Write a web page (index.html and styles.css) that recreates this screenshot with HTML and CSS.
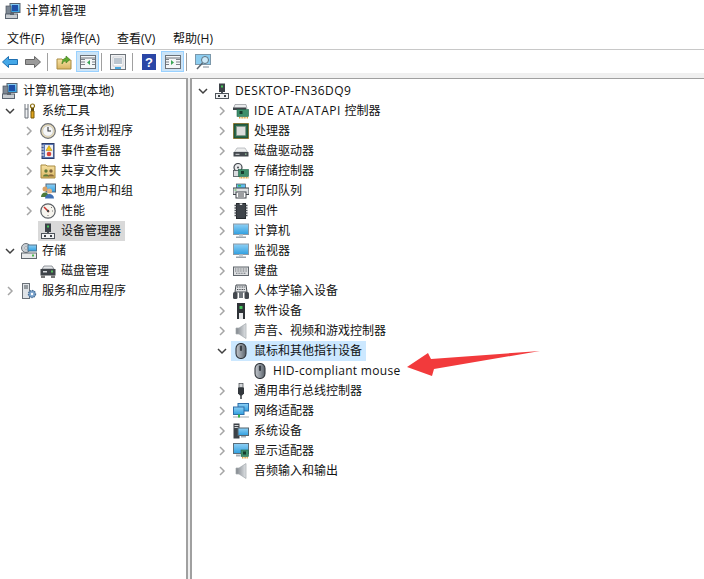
FILE: index.html
```html
<!DOCTYPE html>
<html lang="zh-CN">
<head>
<meta charset="utf-8">
<title>计算机管理</title>
<link rel="stylesheet" href="styles.css">
</head>
<body>
<svg class="defs" width="0" height="0" aria-hidden="true">
<defs>
<linearGradient id="scr" x1="0" y1="0" x2="0" y2="1"><stop offset="0" stop-color="#8fd0f5"/><stop offset="1" stop-color="#2f9fe0"/></linearGradient>
<linearGradient id="mouseg" x1="0" y1="0" x2="1" y2="0"><stop offset="0" stop-color="#c3c7cc"/><stop offset=".55" stop-color="#8c939b"/><stop offset="1" stop-color="#5a6169"/></linearGradient>
<linearGradient id="fold" x1="0" y1="0" x2="0" y2="1"><stop offset="0" stop-color="#f8e3a5"/><stop offset="1" stop-color="#d9b562"/></linearGradient>
<linearGradient id="cone" x1="0" y1="0" x2="1" y2="0"><stop offset="0" stop-color="#7f858b"/><stop offset="1" stop-color="#dfe2e5"/></linearGradient>
<symbol id="i-mgmt" viewBox="0 0 16 16"><rect x="5" y="0.500" width="10" height="9" fill="url(#scr)" stroke="#5a6470"/><rect x="7" y="2" width="6" height="6" fill="#1d4fa8"/><rect x="1" y="3" width="5" height="8" fill="#7d8894" stroke="#4a525c" stroke-width=".7"/><rect x="0.500" y="11" width="12" height="4.500" fill="#c7ccd1" stroke="#5a6470"/><rect x="5" y="10" width="4" height="2" fill="#5a6470"/></symbol>
<symbol id="i-tools" viewBox="0 0 16 16"><path d="M4 1v5M7 1v5M4 6h3v9H4z" fill="#eef0f2" stroke="#6a7078"/><path d="M11.500 5v3" stroke="#5c4a10" stroke-width="3"/><path d="M10 8h3v7h-3z" fill="#e0a51c" stroke="#7a5a08"/><circle cx="11.500" cy="3" r="2" fill="none" stroke="#8a6d10" stroke-width="1.200"/></symbol>
<symbol id="i-clock" viewBox="0 0 16 16"><circle cx="8" cy="8" r="7.300" fill="#e9dcb8" stroke="#6d7075" stroke-width="1.200"/><circle cx="8" cy="8" r="5.200" fill="#f6f7f8" stroke="#b4b8bd" stroke-width=".5"/><path d="M8 4v4h3" fill="none" stroke="#33373c" stroke-width="1.100"/></symbol>
<symbol id="i-event" viewBox="0 0 16 16"><rect x="2" y="0.500" width="12" height="15" fill="#5b78b5" stroke="#2c3d6b"/><rect x="5" y="2" width="8" height="12" fill="#f0f1f3"/><path d="M1 3h3M1 6h3M1 9h3M1 12h3" stroke="#e8eaf0"/><path d="M9 2.500l3 5H6z" fill="#f4c71a" stroke="#a07e10" stroke-width=".5"/><circle cx="9" cy="11" r="2.300" fill="#d8433a"/></symbol>
<symbol id="i-share" viewBox="0 0 16 16"><path d="M1 2h5l1 1h8v12H1z" fill="url(#fold)" stroke="#a88a40"/><circle cx="6" cy="8" r="1.700" fill="#5f7a3a"/><path d="M3 13.500c0-3 6-3 6 0z" fill="#5f7a3a"/><circle cx="11" cy="8" r="1.700" fill="#7a5f3a"/><path d="M8 13.500c0-3 6-3 6 0z" fill="#8b6a3c"/></symbol>
<symbol id="i-users" viewBox="0 0 16 16"><rect x="6" y="1" width="9.500" height="8" fill="url(#scr)" stroke="#55667a"/><circle cx="5" cy="6" r="2.500" fill="#d9a066"/><path d="M1 14c0-6 8-6 8 0z" fill="#4e7a3a"/><circle cx="9.500" cy="8" r="2.500" fill="#e2b280"/><path d="M5 15.500c0-6 9-6 9 0z" fill="#3f6fb5"/></symbol>
<symbol id="i-perf" viewBox="0 0 16 16"><circle cx="8" cy="8" r="7.200" fill="#f6f4ee" stroke="#5b5f64" stroke-width="1.200"/><path d="M4 4l5 5" stroke="#c9302c" stroke-width="1.500"/><circle cx="8" cy="8" r="1.200" fill="#444"/><path d="M11 4l1 1M13 8h-1M8 13v-1" stroke="#777"/></symbol>
<symbol id="i-dev" viewBox="0 0 16 16"><rect x="5" y="0.500" width="6" height="8.500" fill="#3d4248"/><rect x="7" y="2.500" width="2" height="2" fill="#46c85a"/><path d="M7 9h2v2H7z" fill="#50565d"/><rect x="1.500" y="10.500" width="13" height="5" fill="#f2f3f4" stroke="#4e545b"/><rect x="4" y="12" width="2" height="2" fill="#3d4248"/><rect x="10" y="12" width="2" height="2" fill="#3d4248"/></symbol>
<symbol id="i-storage" viewBox="0 0 16 16"><circle cx="5" cy="5" r="4.500" fill="#c9ced3" stroke="#6a7179"/><circle cx="5" cy="5" r="1.300" fill="#fff" stroke="#6a7179" stroke-width=".5"/><rect x="7" y="2" width="8.500" height="6" fill="url(#scr)" stroke="#4f7590"/><rect x="0.500" y="10" width="15" height="5.500" fill="#e6e8ea" stroke="#5f666d"/><rect x="11" y="11.500" width="2" height="2" fill="#4fb94f"/></symbol>
<symbol id="i-disk" viewBox="0 0 16 16"><path d="M2 6l2-3h8l2 3z" fill="#e4e6e8" stroke="#6b7178" stroke-width=".7"/><rect x="0.500" y="6" width="15" height="6.500" fill="#3f4449"/><rect x="3" y="8" width="4" height="1.500" fill="#d8dadd"/><rect x="11" y="7.500" width="2" height="2" fill="#56c25d"/><rect x="1" y="12.500" width="4" height="2.500" fill="#777"/><rect x="11" y="12.500" width="4" height="2.500" fill="#777"/></symbol>
<symbol id="i-svc" viewBox="0 0 16 16"><rect x="1.500" y="0.500" width="7" height="15" fill="#dfe3e7" stroke="#6b7178"/><path d="M3 3h4M3 5h4" stroke="#4b5259"/><circle cx="11" cy="11" r="3.500" fill="#7ea6cf" stroke="#4a6f96" stroke-width="1.400" stroke-dasharray="1.500 .8"/><circle cx="11" cy="11" r="1.200" fill="#fff"/></symbol>
<symbol id="i-ide" viewBox="0 0 16 16"><path d="M0.500 5.500L2 1.500h11l1 4z" fill="#e9eaec" stroke="#8c9197" stroke-width=".7"/><rect x="0" y="4.500" width="13" height="2.500" fill="#3f4449"/><rect x="4" y="6.500" width="11.500" height="7" fill="#3f8f6b" stroke="#23634a" stroke-width=".6"/><rect x="6.500" y="8" width="3" height="3" fill="#173d2e"/><path d="M6 14.800h9" stroke="#d8a13a" stroke-width="1.600" stroke-dasharray="1 .6"/></symbol>
<symbol id="i-cpu" viewBox="0 0 16 16"><rect x="0" y="0" width="16" height="16" fill="#c9a44a"/><rect x="1" y="1" width="14" height="14" fill="#27694a" stroke="#1e3a2c" stroke-width=".8"/><rect x="3.500" y="3.500" width="9" height="9" fill="#dcdedc" stroke="#8a908a" stroke-width=".5"/></symbol>
<symbol id="i-hdd" viewBox="0 0 16 16"><path d="M1.500 9l2.500-4h8l2.500 4z" fill="#eceded" stroke="#9a9fa4" stroke-width=".6"/><rect x="0.500" y="9" width="15" height="4.500" fill="#43484d"/><rect x="2.500" y="10.800" width="4" height="1" fill="#d0d2d5"/><rect x="12" y="10.500" width="1.500" height="1.200" fill="#9fd6a4"/></symbol>
<symbol id="i-stctl" viewBox="0 0 16 16"><circle cx="5" cy="4.500" r="4" fill="#e8e9eb" stroke="#454a50" stroke-width="1.200"/><circle cx="5" cy="4.500" r="1" fill="#454a50"/><rect x="0.500" y="7.500" width="6" height="6" fill="#dadcdf" stroke="#4b5157" stroke-width=".8"/><rect x="5.500" y="6.500" width="10" height="7" fill="#3f8f6b" stroke="#23634a" stroke-width=".6"/><rect x="8" y="8" width="3" height="3" fill="#173d2e"/><path d="M6.500 14.800h9" stroke="#d8a13a" stroke-width="1.600" stroke-dasharray="1 .6"/></symbol>
<symbol id="i-print" viewBox="0 0 16 16"><rect x="3.500" y="1" width="9" height="5" fill="#5fbdec" stroke="#4a5057" stroke-width=".7"/><rect x="5" y="2" width="3" height="1.500" fill="#3fb65a"/><rect x="0" y="5" width="16" height="6.500" fill="#dfe1e3" stroke="#3f454b"/><rect x="1.500" y="6.500" width="2" height="1" fill="#4fb94f"/><rect x="3" y="9" width="10" height="6" fill="#fff" stroke="#3f454b"/><path d="M5 11h6M5 13h6" stroke="#3a3f44"/></symbol>
<symbol id="i-fw" viewBox="0 0 16 16"><rect x="3.500" y="0.500" width="9" height="15" fill="#3f444a" stroke="#24282c"/><path d="M1.500 2.500h2M1.500 5h2M1.500 7.500h2M1.500 10h2M1.500 12.500h2M12.500 2.500h2M12.500 5h2M12.500 7.500h2M12.500 10h2M12.500 12.500h2" stroke="#4a4f55" stroke-width="1.300"/><path d="M6.500 0.500a1.500 1.500 0 0 0 3 0z" fill="#fff"/></symbol>
<symbol id="i-pc" viewBox="0 0 16 16"><rect x="0.500" y="1" width="15" height="10.500" fill="url(#scr)" stroke="#8b9aa6"/><path d="M6 11.500h4v2H6z" fill="#c6cdd3"/><rect x="3" y="13.500" width="10" height="1.500" fill="#9aa3ab"/></symbol>
<symbol id="i-kbd" viewBox="0 0 16 16"><rect x="0.500" y="4" width="15" height="8.500" fill="#dcdee0" stroke="#5f656b"/><path d="M2 6h12M2 8h12M3 10.300h10" stroke="#6e7379" stroke-width="1.100" stroke-dasharray="1 .6"/></symbol>
<symbol id="i-hid" viewBox="0 0 16 16"><path d="M2 9l1-7h10l1 7z" fill="#dfe1e3" stroke="#484e54"/><path d="M4 4h8M4 6.500h8" stroke="#44494f" stroke-width="1.100" stroke-dasharray="1 .7"/><rect x="0" y="9" width="4.500" height="7" rx="1.500" fill="#43484e"/><rect x="11.500" y="9" width="4.500" height="7" rx="1.500" fill="#43484e"/><rect x="6" y="9" width="4" height="6" fill="#6f757b"/></symbol>
<symbol id="i-sw" viewBox="0 0 16 16"><rect x="4" y="0" width="8" height="16" fill="#2e3237"/><rect x="6.500" y="3" width="3" height="3" fill="#43c25b"/><rect x="6" y="10" width="4" height="6" fill="#e7e8ea"/></symbol>
<symbol id="i-snd" viewBox="0 0 16 16"><path d="M3 5h3L13 0.500v15L6 11H3z" fill="url(#cone)" stroke="#a4a9ae" stroke-width=".7"/></symbol>
<symbol id="i-mouse" viewBox="0 0 16 16"><rect x="3" y="0.500" width="10" height="15" rx="5" fill="url(#mouseg)" stroke="#31363c" stroke-width="1.100"/><rect x="6.900" y="2.500" width="2.200" height="5.500" rx="1.100" fill="#3a4047"/></symbol>
<symbol id="i-usb" viewBox="0 0 16 16"><rect x="6" y="0.500" width="4" height="4" fill="#d2d5d8" stroke="#43484d" stroke-width=".7"/><path d="M5 4.500h6v6l-2 2H7l-2-2z" fill="#33383d"/><path d="M8 12v4" stroke="#33383d" stroke-width="1.500"/></symbol>
<symbol id="i-net" viewBox="0 0 16 16"><rect x="5" y="0.500" width="10.500" height="7.500" fill="url(#scr)" stroke="#2f6ea8"/><rect x="0.500" y="4" width="10.500" height="7.500" fill="url(#scr)" stroke="#2f6ea8"/><rect x="0" y="13" width="16" height="2" fill="#cfd3d6"/><path d="M5 11.500h2v3H5z" fill="#39b54a"/></symbol>
<symbol id="i-sys" viewBox="0 0 16 16"><rect x="0.500" y="0.500" width="6" height="15" fill="#3c4147"/><rect x="1.500" y="2" width="4" height="1" fill="#d5d7da"/><rect x="1.500" y="4" width="4" height="1" fill="#d5d7da"/><rect x="5" y="5" width="10.500" height="7.500" fill="url(#scr)" stroke="#54646f"/><rect x="8" y="13" width="5" height="1.500" fill="#a6adb3"/></symbol>
<symbol id="i-disp" viewBox="0 0 16 16"><rect x="0.500" y="0.500" width="15" height="10" fill="url(#scr)" stroke="#5a6d7a"/><rect x="8" y="7" width="7.500" height="6.500" fill="#3f8f6b" stroke="#23634a" stroke-width=".6"/><rect x="10" y="8.500" width="3" height="3" fill="#173d2e"/><path d="M9 14.800h6" stroke="#d8a13a" stroke-width="1.500" stroke-dasharray="1 .6"/><rect x="3" y="11.500" width="4" height="2" fill="#a6adb3"/></symbol>
<symbol id="chev-r" viewBox="0 0 16 16"><path d="M6 4l4 4-4 4" fill="none" stroke="#a6a6a6" stroke-width="1.500"/></symbol>
<symbol id="chev-d" viewBox="0 0 16 16"><path d="M4 6l4 4 4-4" fill="none" stroke="#404040" stroke-width="1.500"/></symbol>
</defs>
</svg>

<header class="titlebar">
  <svg class="ic"><use href="#i-mgmt"/></svg>
  <span>计算机管理</span>
</header>

<nav class="menubar">
  <span class="menu">文件(F)</span>
  <span class="menu">操作(A)</span>
  <span class="menu">查看(V)</span>
  <span class="menu">帮助(H)</span>
</nav>

<div class="toolbar">
  <span class="tool tool-arrow"><svg viewBox="0 0 16 12" class="ic-arrow"><path d="M0.500 6L6.500 0.500V3.500H15.500V8.500H6.500V11.500z" fill="#45a8e8" stroke="#1f6fb0"/></svg></span>
  <span class="tool tool-arrow"><svg viewBox="0 0 16 12" class="ic-arrow"><path d="M15.500 6L9.500 0.500V3.500H0.500V8.500H9.500V11.500z" fill="#9a9a9a" stroke="#666"/></svg></span>
  <span class="sep"></span>
  <span class="tool tool-up"><svg viewBox="0 0 16 16" class="ic"><path d="M1 5h5l1 1h8v9H1z" fill="url(#fold)" stroke="#a88a40"/><path d="M6 10c0-4 2-6 4-6V2l4 3.500L10 9V7c-2 0-3 1-4 3z" fill="#5fa82f" stroke="#3f7a1c" stroke-width=".6"/></svg></span>
  <span class="tool tool-on"><svg viewBox="0 0 16 14" class="ic-pane"><rect x="0.500" y="0.500" width="15" height="13" fill="#f4f6f8" stroke="#6b7178"/><path d="M0.500 3h15" stroke="#6b7178"/><path d="M1 4.500h4M1 7h4M1 9.500h4M12 4.500h3M12 7h3M12 9.500h3" stroke="#7a8087"/><path d="M10 5v5L7 7.500z" fill="#3aa655"/></svg></span>
  <span class="sep"></span>
  <span class="tool tool-page"><svg viewBox="0 0 16 16" class="ic"><rect x="0.500" y="0.500" width="15" height="15" fill="#f1f2f4" stroke="#6f757b"/><rect x="3" y="3" width="10" height="9" fill="#fff" stroke="#a8adb2" stroke-width=".5"/><path d="M4 5h8M4 7h8M4 9h8" stroke="#7a8d9f"/><rect x="5" y="13" width="6" height="2" fill="#4aa8e0"/></svg></span>
  <span class="sep"></span>
  <span class="tool tool-help"><svg viewBox="0 0 14 16" class="ic-help"><rect width="14" height="16" fill="#2a46a6"/><text x="7" y="13" class="help-q">?</text></svg></span>
  <span class="tool tool-on tool-tight"><svg viewBox="0 0 16 14" class="ic-pane"><rect x="0.500" y="0.500" width="15" height="13" fill="#f4f6f8" stroke="#6b7178"/><path d="M0.500 3h15" stroke="#6b7178"/><path d="M1 4.500h3M1 7h3M1 9.500h3M11 4.500h4M11 7h4M11 9.500h4" stroke="#7a8087"/><path d="M6 5v5l3-2.500z" fill="#3aa655"/></svg></span>
  <span class="sep"></span>
  <span class="tool"><svg viewBox="0 0 16 16" class="ic"><rect x="0.500" y="0.500" width="15" height="10" fill="#8ccdf0" stroke="#7c98aa"/><circle cx="10" cy="6" r="3.500" fill="#cdeafa" stroke="#5d7280"/><path d="M7.500 9L2 15" stroke="#5d6770" stroke-width="1.500"/><path d="M8 13h6" stroke="#a9b1b8" stroke-width="1.500"/></svg></span>
</div>

<main class="panes">
  <aside class="pane pane-left">
    <div class="row row-root"><span class="node"><svg class="ic"><use href="#i-mgmt"/></svg>计算机管理(本地)</span></div>
    <div class="row l1"><svg class="ch"><use href="#chev-d"/></svg><span class="node"><svg class="ic"><use href="#i-tools"/></svg>系统工具</span></div>
    <div class="row l2"><svg class="ch"><use href="#chev-r"/></svg><span class="node"><svg class="ic"><use href="#i-clock"/></svg>任务计划程序</span></div>
    <div class="row l2"><svg class="ch"><use href="#chev-r"/></svg><span class="node"><svg class="ic"><use href="#i-event"/></svg>事件查看器</span></div>
    <div class="row l2"><svg class="ch"><use href="#chev-r"/></svg><span class="node"><svg class="ic"><use href="#i-share"/></svg>共享文件夹</span></div>
    <div class="row l2"><svg class="ch"><use href="#chev-r"/></svg><span class="node"><svg class="ic"><use href="#i-users"/></svg>本地用户和组</span></div>
    <div class="row l2"><svg class="ch"><use href="#chev-r"/></svg><span class="node"><svg class="ic"><use href="#i-perf"/></svg>性能</span></div>
    <div class="row l2"><span class="ch"></span><span class="node sel-gray"><svg class="ic"><use href="#i-dev"/></svg>设备管理器</span></div>
    <div class="row l1"><svg class="ch"><use href="#chev-d"/></svg><span class="node"><svg class="ic"><use href="#i-storage"/></svg>存储</span></div>
    <div class="row l2"><span class="ch"></span><span class="node"><svg class="ic"><use href="#i-disk"/></svg>磁盘管理</span></div>
    <div class="row l1"><svg class="ch"><use href="#chev-r"/></svg><span class="node"><svg class="ic"><use href="#i-svc"/></svg>服务和应用程序</span></div>
  </aside>
  <section class="pane pane-right">
    <div class="row r0"><svg class="ch"><use href="#chev-d"/></svg><span class="node"><svg class="ic"><use href="#i-dev"/></svg><span class="sp-4">DESKTOP-FN36DQ9</span></span></div>
    <div class="row r1"><svg class="ch"><use href="#chev-r"/></svg><span class="node"><svg class="ic"><use href="#i-ide"/></svg><span><span class="sp-5">IDE ATA/ATAPI </span>控制器</span></span></div>
    <div class="row r1"><svg class="ch"><use href="#chev-r"/></svg><span class="node"><svg class="ic"><use href="#i-cpu"/></svg>处理器</span></div>
    <div class="row r1"><svg class="ch"><use href="#chev-r"/></svg><span class="node"><svg class="ic"><use href="#i-hdd"/></svg>磁盘驱动器</span></div>
    <div class="row r1"><svg class="ch"><use href="#chev-r"/></svg><span class="node"><svg class="ic"><use href="#i-stctl"/></svg>存储控制器</span></div>
    <div class="row r1"><svg class="ch"><use href="#chev-r"/></svg><span class="node"><svg class="ic"><use href="#i-print"/></svg>打印队列</span></div>
    <div class="row r1"><svg class="ch"><use href="#chev-r"/></svg><span class="node"><svg class="ic"><use href="#i-fw"/></svg>固件</span></div>
    <div class="row r1"><svg class="ch"><use href="#chev-r"/></svg><span class="node"><svg class="ic"><use href="#i-pc"/></svg>计算机</span></div>
    <div class="row r1"><svg class="ch"><use href="#chev-r"/></svg><span class="node"><svg class="ic"><use href="#i-pc"/></svg>监视器</span></div>
    <div class="row r1"><svg class="ch"><use href="#chev-r"/></svg><span class="node"><svg class="ic"><use href="#i-kbd"/></svg>键盘</span></div>
    <div class="row r1"><svg class="ch"><use href="#chev-r"/></svg><span class="node"><svg class="ic"><use href="#i-hid"/></svg>人体学输入设备</span></div>
    <div class="row r1"><svg class="ch"><use href="#chev-r"/></svg><span class="node"><svg class="ic"><use href="#i-sw"/></svg>软件设备</span></div>
    <div class="row r1"><svg class="ch"><use href="#chev-r"/></svg><span class="node"><svg class="ic"><use href="#i-snd"/></svg>声音、视频和游戏控制器</span></div>
    <div class="row r1"><svg class="ch"><use href="#chev-d"/></svg><span class="node sel-blue"><svg class="ic"><use href="#i-mouse"/></svg>鼠标和其他指针设备</span></div>
    <div class="row r2"><span class="ch"></span><span class="node"><svg class="ic"><use href="#i-mouse"/></svg><span class="sp-3">HID-compliant mouse</span></span></div>
    <div class="row r1"><svg class="ch"><use href="#chev-r"/></svg><span class="node"><svg class="ic"><use href="#i-usb"/></svg>通用串行总线控制器</span></div>
    <div class="row r1"><svg class="ch"><use href="#chev-r"/></svg><span class="node"><svg class="ic"><use href="#i-net"/></svg>网络适配器</span></div>
    <div class="row r1"><svg class="ch"><use href="#chev-r"/></svg><span class="node"><svg class="ic"><use href="#i-sys"/></svg>系统设备</span></div>
    <div class="row r1"><svg class="ch"><use href="#chev-r"/></svg><span class="node"><svg class="ic"><use href="#i-disp"/></svg>显示适配器</span></div>
    <div class="row r1"><svg class="ch"><use href="#chev-r"/></svg><span class="node"><svg class="ic"><use href="#i-snd"/></svg>音频输入和输出</span></div>
  </section>
</main>

<svg class="callout" viewBox="0 0 140 30" aria-hidden="true"><path d="M0 17L21 3L24 9L133 1L27 19L25 26z" fill="#f23a3c"/></svg>
</body>
</html>
```
FILE: styles.css
```css
* { box-sizing: border-box; }
html, body { margin: 0; height: 100%; }
body {
  position: relative;
  width: 704px;
  height: 579px;
  overflow: hidden;
  background: #fff;
  color: #111;
  font: 12px/20px "Open Sans", "Noto Sans CJK SC", sans-serif;
  display: flex;
  flex-direction: column;
}
.defs { position: absolute; }
.ic { width: 16px; height: 16px; flex: none; display: block; }
.titlebar {
  height: 21px;
  flex: none;
  padding-left: 5px;
  display: flex;
  align-items: center;
  gap: 5px;
}
.menubar {
  height: 29px;
  flex: none;
  display: flex;
  align-items: center;
  padding: 7px 0 0 7px;
  border-bottom: 1px solid #c8c8c8;
}
.menu { width: 56px; flex: none; }
.menu:first-child { width: 54px; }
.toolbar {
  height: 23px;
  flex: none;
  display: flex;
  align-items: center;
  padding-left: 2px;
}
.tool { flex: none; display: flex; align-items: center; justify-content: center; margin-right: 6px; }
.tool-arrow { width: 16px; margin-right: 7px; }
.tool-up { margin-right: 4px; }
.tool-page { margin-right: 7px; }
.tool-help { margin-left: 1px; }
.ic-arrow { width: 16px; height: 12px; display: block; }
.ic-pane { width: 16px; height: 14px; display: block; }
.ic-help { width: 14px; height: 16px; display: block; }
.help-q { font: bold 13px "Liberation Sans", sans-serif; fill: #fff; text-anchor: middle; }
.tool-on {
  width: 23px;
  height: 21px;
  margin-right: 3px;
  background: #cce4f7;
  border: 1px solid #99d1ff;
}
.tool-tight { margin-left: -1px; }
.sep { width: 1px; height: 18px; background: #a0a0a0; margin: 0 8px 0 -1px; flex: none; }
.panes {
  flex: 1;
  display: flex;
  gap: 2px;
  min-height: 0;
  padding-top: 5px;
  background: #f0f0f0;
}
.pane { padding-top: 2px; border-top: 1px solid #a0a0a0; background: #fff; }
.pane-left { width: 188px; flex: none; border-right: 2px solid #a0a0a0; }
.pane-right { flex: 1; border-left: 2px solid #a0a0a0; }
.row { height: 20px; display: flex; align-items: center; }
.ch { width: 16px; height: 16px; flex: none; display: block; }
.node {
  display: flex;
  align-items: center;
  gap: 5px;
  height: 20px;
  margin-left: 1px;
  padding: 0 4px 0 2px;
  white-space: nowrap;
}
.row-root { padding-left: 1px; }
.row-root .node { margin-left: 0; padding-left: 1px; }
.l1 { padding-left: 2px; }
.l2 { padding-left: 21px; }
.r0 { padding-left: 3px; }
.r1 { padding-left: 22px; }
.r2 { padding-left: 41px; }
.sel-gray { background: #d9d9d9; }
.sel-blue { background: #cce8ff; }
.sp-3 { letter-spacing: .3px; }
.sp-4 { letter-spacing: .4px; }
.sp-5 { letter-spacing: .5px; white-space: pre; }
.callout {
  position: absolute;
  left: 407px;
  top: 350px;
  width: 140px;
  height: 30px;
}
```
